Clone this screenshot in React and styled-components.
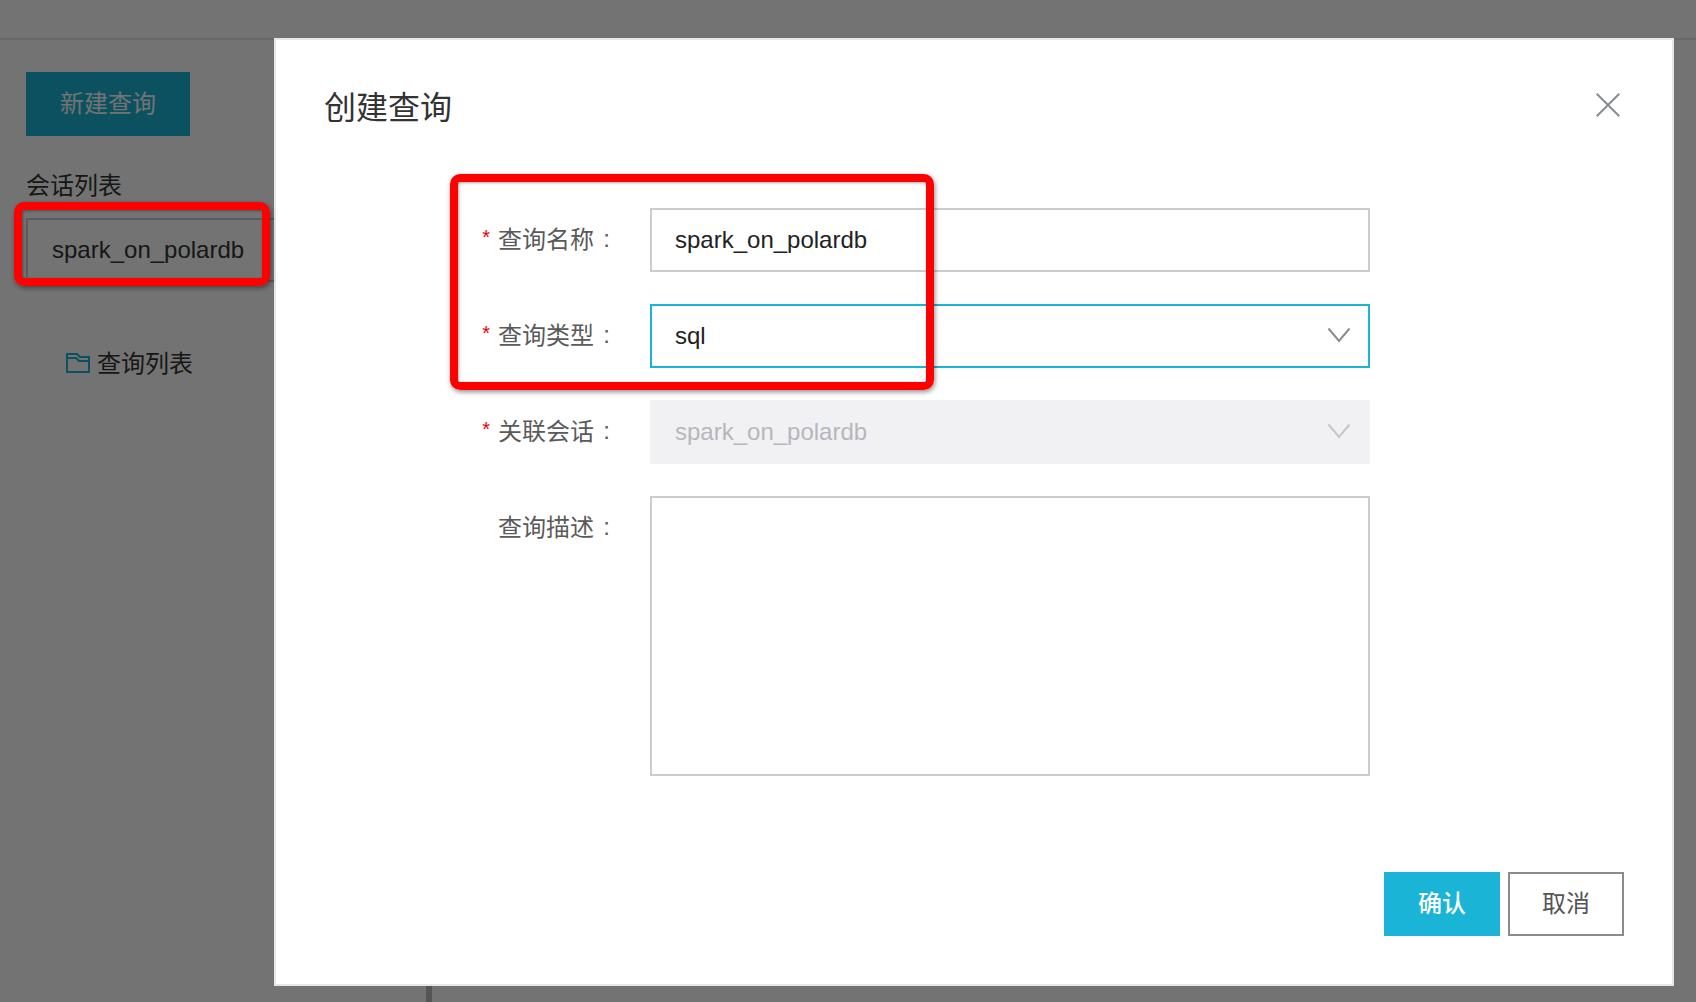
import React from "react";
import styled, { createGlobalStyle } from "styled-components";

const GlobalStyle = createGlobalStyle`
    html, body {
        margin: 0;
        padding: 0;
        height: 100%;
        overflow: hidden;
        background: #fff;
    }
    * {
        box-sizing: border-box;
    }
    body {
        font-family: "Liberation Sans", "Noto Sans CJK SC", sans-serif;
        font-size: 24px;
        color: #333;
    }
`;

const Page = styled.div`
    display: flex;
    flex-direction: column;
    height: 1002px;
`;

const TopBar = styled.div`
    height: 40px;
    flex: none;
    border-bottom: 2px solid #e6e6e6;
`;

const Body = styled.div`
    display: flex;
    flex: 1;
`;

const Sidebar = styled.aside`
    width: 274px;
    flex: none;
    padding: 32px 0 0 26px;
`;

const NewButton = styled.div`
    width: 164px;
    height: 64px;
    padding-bottom: 6px;
    display: flex;
    align-items: center;
    justify-content: center;
    background: #19b4d6;
    color: #fff;
`;

const SectionTitle = styled.div`
    margin-top: 32px;
    height: 36px;
    line-height: 36px;
`;

const SessionItem = styled.div`
    margin-top: 14px;
    height: 64px;
    line-height: 60px;
    padding-left: 24px;
    border: 2px solid #ccc;
    border-right: none;
    white-space: nowrap;
`;

const QueryLink = styled.div`
    margin-top: 61px;
    padding-left: 40px;
    height: 36px;
    display: flex;
    align-items: center;
    gap: 7px;
`;

const FolderIcon = styled.svg`
    width: 24px;
    height: 20px;
    display: block;
    margin-top: 4px;
`;

const Splitter = styled.div`
    width: 6px;
    margin-left: 152px;
    background: #bdbdbd;
`;

const Backdrop = styled.div`
    position: fixed;
    inset: 0;
    background: rgba(0, 0, 0, 0.55);
`;

const Modal = styled.div`
    position: fixed;
    left: 274px;
    top: 38px;
    width: 1400px;
    height: 948px;
    display: flex;
    flex-direction: column;
    background: #fff;
    border: 2px solid #e6e7eb;
`;

const ModalHeader = styled.div`
    display: flex;
    align-items: center;
    justify-content: space-between;
    padding: 48px 52px 0 48px;
`;

const ModalTitle = styled.h2`
    margin: 0;
    font-size: 32px;
    line-height: 40px;
    font-weight: 400;
    color: #333;
`;

const CloseIcon = styled.svg`
    width: 24px;
    height: 24px;
    margin-top: -6px;
    display: block;
`;

const Form = styled.div`
    margin-top: 80px;
    display: flex;
    flex-direction: column;
    gap: 32px;
`;

const Row = styled.div`
    display: flex;
    align-items: flex-start;
`;

const Label = styled.div`
    width: 374px;
    height: 64px;
    padding: 0 32px 6px 0;
    display: flex;
    align-items: center;
    justify-content: flex-end;
    color: #5a5a5a;
    white-space: nowrap;
`;

const Star = styled.span`
    color: #e8000b;
    font-size: 20px;
    margin-right: 8px;
`;

const Colon = styled.span`
    width: 24px;
    margin-top: 4px;
    text-align: right;
    padding-right: 8px;
`;

const Field = styled.div`
    width: 720px;
    height: ${(p) => (p.$tall ? "280px" : "64px")};
    padding: 0 17px 0 23px;
    display: flex;
    align-items: center;
    justify-content: space-between;
    background: ${(p) => (p.$disabled ? "#f1f1f3" : "#fff")};
    border: 2px solid ${(p) => (p.$focus ? "#19b4d6" : p.$disabled ? "#f1f1f3" : "#ccc")};
    color: ${(p) => (p.$disabled ? "#b6b7bc" : "#222")};
`;

const Chevron = styled.svg`
    width: 24px;
    height: 16px;
    margin-top: -2px;
    display: block;
    color: ${(p) => (p.$disabled ? "#c4c6cf" : "#888c90")};
`;

const Footer = styled.div`
    margin-top: auto;
    padding: 0 48px 48px 0;
    display: flex;
    justify-content: flex-end;
    gap: 8px;
`;

const Button = styled.div`
    width: 116px;
    height: 64px;
    padding-bottom: 6px;
    display: flex;
    align-items: center;
    justify-content: center;
    background: ${(p) => (p.$primary ? "#19b4d6" : "#fff")};
    border: 2px solid ${(p) => (p.$primary ? "#19b4d6" : "#888c90")};
    color: ${(p) => (p.$primary ? "#fff" : "#555")};
    font-weight: ${(p) => (p.$primary ? 500 : 400)};
`;

// red annotation frames drawn over the screenshot
const Callout = styled.div`
    position: fixed;
    left: ${(p) => p.$x}px;
    top: ${(p) => p.$y}px;
    width: ${(p) => p.$w}px;
    height: ${(p) => p.$h}px;
    border: 8px solid #fe0000;
    border-radius: 10px;
    box-shadow: 1px 2px 5px rgba(0, 0, 0, 0.45), inset 1px 1px 3px rgba(0, 0, 0, 0.35);
`;

function ChevronDown({ disabled }) {
    return (
        <Chevron $disabled={disabled} viewBox="0 0 24 16" fill="none">
            <path d="M1.5 1.5 L12 14 L22.5 1.5" stroke="currentColor" strokeWidth="2" />
        </Chevron>
    );
}

function FormRow({ label, required, children }) {
    return (
        <Row>
            <Label>
                {required && <Star>*</Star>}
                {label}
                <Colon>:</Colon>
            </Label>
            {children}
        </Row>
    );
}

export default function App() {
    return (
        <>
            <GlobalStyle />
            <Page>
                <TopBar />
                <Body>
                    <Sidebar>
                        <NewButton>新建查询</NewButton>
                        <SectionTitle>会话列表</SectionTitle>
                        <SessionItem>spark_on_polardb</SessionItem>
                        <QueryLink>
                            <FolderIcon viewBox="0 0 24 20" fill="none">
                                <path d="M1 19 V1 H11 L14 4 H23 V19 Z M1 5 H10 L13 8 H23" stroke="#19b4d6" strokeWidth="2" />
                            </FolderIcon>
                            查询列表
                        </QueryLink>
                    </Sidebar>
                    <Splitter />
                </Body>
            </Page>

            <Backdrop />

            <Modal>
                <ModalHeader>
                    <ModalTitle>创建查询</ModalTitle>
                    <CloseIcon viewBox="0 0 24 24" fill="none">
                        <path d="M0.7 0.7 L23.3 23.3 M23.3 0.7 L0.7 23.3" stroke="#888c90" strokeWidth="2" />
                    </CloseIcon>
                </ModalHeader>

                <Form>
                    <FormRow label="查询名称" required>
                        <Field>spark_on_polardb</Field>
                    </FormRow>
                    <FormRow label="查询类型" required>
                        <Field $focus>
                            sql
                            <ChevronDown />
                        </Field>
                    </FormRow>
                    <FormRow label="关联会话" required>
                        <Field $disabled>
                            spark_on_polardb
                            <ChevronDown disabled />
                        </Field>
                    </FormRow>
                    <FormRow label="查询描述">
                        <Field $tall />
                    </FormRow>
                </Form>

                <Footer>
                    <Button $primary>确认</Button>
                    <Button>取消</Button>
                </Footer>
            </Modal>

            <Callout $x={14} $y={202} $w={256} $h={84} />
            <Callout $x={450} $y={174} $w={484} $h={216} />
        </>
    );
}
